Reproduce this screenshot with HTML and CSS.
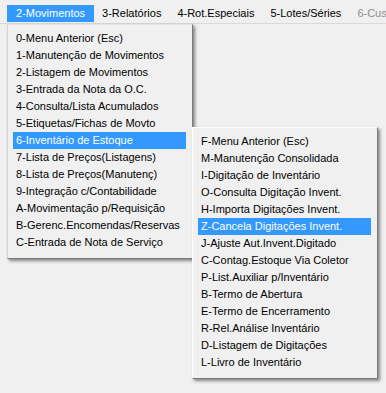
FILE: index.html
```html
<!DOCTYPE html>
<html lang="pt-BR">
<head>
<meta charset="utf-8">
<title>Menu Movimentos</title>
<link rel="stylesheet" href="styles.css">
</head>
<body>
<div class="app">
  <nav class="menubar">
    <span class="mb-item active">2-Movimentos</span>
    <span class="mb-item">3-Relatórios</span>
    <span class="mb-item">4-Rot.Especiais</span>
    <span class="mb-item">5-Lotes/Séries</span>
    <span class="mb-item disabled">6-Customização</span>
  </nav>
  <div class="menus">
    <ul class="menu menu-main">
      <li class="item">0-Menu Anterior (Esc)</li>
      <li class="item">1-Manutenção de Movimentos</li>
      <li class="item">2-Listagem de Movimentos</li>
      <li class="item">3-Entrada da Nota da O.C.</li>
      <li class="item">4-Consulta/Lista Acumulados</li>
      <li class="item">5-Etiquetas/Fichas de Movto</li>
      <li class="item selected">6-Inventário de Estoque</li>
      <li class="item">7-Lista de Preços(Listagens)</li>
      <li class="item">8-Lista de Preços(Manutenç)</li>
      <li class="item">9-Integração c/Contabilidade</li>
      <li class="item">A-Movimentação p/Requisição</li>
      <li class="item">B-Gerenc.Encomendas/Reservas</li>
      <li class="item">C-Entrada de Nota de Serviço</li>
    </ul>
    <ul class="menu menu-sub">
      <li class="item">F-Menu Anterior (Esc)</li>
      <li class="item">M-Manutenção Consolidada</li>
      <li class="item">I-Digitação de Inventário</li>
      <li class="item">O-Consulta Digitação Invent.</li>
      <li class="item">H-Importa Digitações Invent.</li>
      <li class="item selected">Z-Cancela Digitações Invent.</li>
      <li class="item">J-Ajuste Aut.Invent.Digitado</li>
      <li class="item">C-Contag.Estoque Via Coletor</li>
      <li class="item">P-List.Auxiliar p/Inventário</li>
      <li class="item">B-Termo de Abertura</li>
      <li class="item">E-Termo de Encerramento</li>
      <li class="item">R-Rel.Análise Inventário</li>
      <li class="item">D-Listagem de Digitações</li>
      <li class="item">L-Livro de Inventário</li>
    </ul>
  </div>
</div>
</body>
</html>
```

FILE: styles.css
```css
html, body {
  margin: 0;
  padding: 0;
  background: #f0f0f0;
}
body {
  width: 386px;
  height: 393px;
  overflow: hidden;
  font-family: "Liberation Sans", Arial, sans-serif;
  font-size: 11px;
  color: #000;
}
.app {
  width: 386px;
  height: 393px;
  overflow: hidden;
}
.menubar {
  display: flex;
  height: 24px;
  box-sizing: border-box;
  padding: 5px 0 0 7px;
  border-bottom: 1px solid #d9d9d9;
  white-space: nowrap;
  overflow: hidden;
}
.mb-item {
  flex: none;
  height: 17px;
  line-height: 17px;
  padding: 0 8px;
  font-size: 11px;
}
.mb-item.active {
  padding: 0 9px;
  background: #3399ff;
  color: #fff;
}
.mb-item.disabled {
  color: #8d8d8d;
}
.menus {
  display: flex;
  align-items: flex-start;
  padding-left: 7px;
}
.menu {
  list-style: none;
  margin: 0;
  width: 186px;
  box-sizing: border-box;
  padding: 5px 6px 7px 5px;
  background: #f0f0f0;
  border: 1px solid;
  border-color: #ffffff #7a7a7a #7a7a7a #ffffff;
  box-shadow: 2px 2px 3px rgba(0, 0, 0, 0.45);
}
.menu-main {
  border-left-color: #d4d4d4;
  border-top-color: #e4e4e4;
}
.menu-sub {
  margin-top: 103px;
  margin-left: -1px;
  position: relative;
}
.item {
  height: 17px;
  line-height: 17px;
  padding-left: 3px;
  white-space: nowrap;
}
.item.selected {
  background: #3399ff;
  color: #fff;
}
```
